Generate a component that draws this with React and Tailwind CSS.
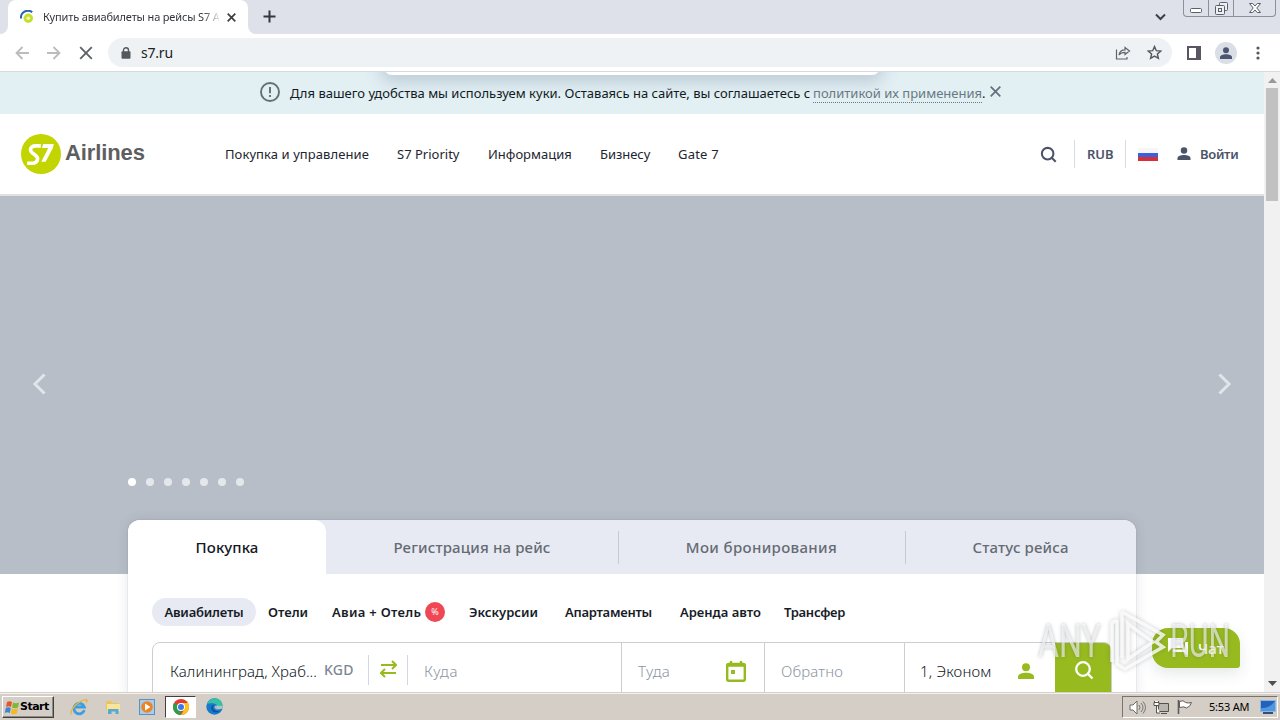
const products = [
  { t: "Покупка", c: "w-[198px] rounded-t-[12px] bg-white text-[#14171f] tracking-[0.1px]" },
  { t: "Регистрация на рейс", c: "w-[292px] text-[#666a73] tracking-[0.15px]" },
  { t: "Мои бронирования", c: "w-[287px] text-[#666a73] tracking-[0.35px]", line: true },
  { t: "Статус рейса", c: "w-[231px] text-[#666a73] tracking-[0.15px]", line: true },
];

const nav = [
  { t: "Покупка и управление", c: "w-[172px] tracking-[0.08px]" },
  { t: "S7 Priority", c: "w-[91px]" },
  { t: "Информация", c: "w-[112px]" },
  { t: "Бизнесу", c: "w-[78px] -tracking-[0.05px]" },
  { t: "Gate 7", c: "w-[60px] tracking-[0.2px]" },
];

function Search({ className, w = 2.4 }) {
  return (
    <svg className={className} viewBox="0 0 20 20" fill="none" stroke="currentColor" strokeWidth={w}>
      <circle cx="9" cy="9" r="6.8" />
      <path d="M13.8 13.8 18.5 18.5" />
    </svg>
  );
}

function Person({ className }) {
  return (
    <svg className={className} viewBox="0 0 16 16" fill="currentColor">
      <circle cx="8" cy="4.2" r="4" />
      <path d="M0 16v-2.2C0 11 4 9.8 8 9.8s8 1.200 8 4V16z" />
    </svg>
  );
}

function TabStrip() {
  return (
    <div className="flex h-[34px] shrink-0 bg-[#dee1e9]">
      <div className="w-2 bg-white">
        <div className="h-full rounded-br-[8px] bg-[#dee1e9]" />
      </div>
      <div className="flex w-[240px] items-center rounded-t-[8px] bg-white pl-3">
        <svg className="size-[14px] shrink-0" viewBox="0 0 14 14">
          <circle cx="8.300" cy="8.300" r="4.700" fill="#c4e02c" />
          <circle cx="8.300" cy="8.300" r="1.800" fill="#f0f5b8" />
          <path d="M1 8.500A7 7 0 0 1 12.200 2.200" fill="none" stroke="#2a62b8" strokeWidth="2" />
        </svg>
        <div className="ml-[9px] h-[18px] w-[176px] overflow-hidden text-[11px] leading-[18px] whitespace-nowrap text-[#33363b] [mask-image:linear-gradient(to_right,black_160px,transparent_178px)] -tracking-[0.15px]">
          Купить авиабилеты на рейсы S7 A
        </div>
        <svg className="ml-[8px] size-[9px] shrink-0" viewBox="0 0 9 9" stroke="#3c4043" strokeWidth="1.700">
          <path d="M.7.7l7.600 7.600M8.300.7L.7 8.300" />
        </svg>
      </div>
      <div className="w-2 bg-white">
        <div className="h-full rounded-bl-[8px] bg-[#dee1e9]" />
      </div>
      <svg className="mt-[10px] ml-[7px] size-[13px]" viewBox="0 0 13 13" stroke="#33363b" strokeWidth="2">
        <path d="M6.500.5v12M.5 6.500h12" />
      </svg>
      <svg className="mt-[13px] ml-auto h-[8px] w-[11px]" viewBox="0 0 11 8" fill="none" stroke="#3c4043" strokeWidth="2">
        <path d="M1 1.500l4.500 4.500L10 1.500" />
      </svg>
      <div className="mr-[4px] ml-[17px] flex h-[17px] w-[93px] rounded-b-[4px] border border-t-0 border-[#8b909b] text-[#5a5f68]">
        <div className="flex w-[25px] justify-center border-r border-[#8b909b]">
          <svg className="mt-[8px] h-[5px] w-[12px]" viewBox="0 0 12 5" fill="#fff" stroke="currentColor"><rect x=".5" y=".5" width="11" height="4" rx="1" /></svg>
        </div>
        <div className="flex w-[25px] justify-center border-r border-[#8b909b]">
          <svg className="mt-[2px] size-[13px]" viewBox="0 0 13 13" fill="#eef0f4" stroke="currentColor"><rect x="4.500" y=".5" width="8" height="8" rx="1" /><rect x=".5" y="3.500" width="9" height="9" rx="1" /><rect x="3.500" y="6.500" width="3" height="3" /></svg>
        </div>
        <div className="flex flex-1 justify-center">
          <svg className="mt-[3px] h-[10px] w-[12px]" viewBox="0 0 12 10" fill="#fff" stroke="currentColor"><path d="M.5.5h3.200L6 3 8.300.5h3.200L7.800 5l3.700 4.500H8.300L6 7 3.700 9.500H.5L4.200 5z" /></svg>
        </div>
      </div>
    </div>
  );
}

function Toolbar() {
  return (
    <div className="flex h-[38px] shrink-0 items-center border-b border-[#d5dadc] bg-white">
      <div className="ml-[15px] flex items-center gap-[18px]">
        <svg className="h-[14px] w-[14px]" viewBox="0 0 14 14" fill="none" stroke="#babcbe" strokeWidth="1.800"><path d="M14 7H1.500M7.500 1l-6 6 6 6" /></svg>
        <svg className="h-[14px] w-[14px]" viewBox="0 0 14 14" fill="none" stroke="#babcbe" strokeWidth="1.800"><path d="M0 7h12.500M6.500 1l6 6-6 6" /></svg>
        <svg className="h-[14px] w-[14px]" viewBox="0 0 14 14" fill="none" stroke="#5f6368" strokeWidth="1.900"><path d="M1.200 1.200l11.600 11.600M12.800 1.200l-11.600 11.600" /></svg>
      </div>
      <div className="ml-[15px] flex h-[29px] w-[1064px] items-center rounded-full bg-[#eff2f5] pr-[10px] pl-[13px]">
        <svg className="h-[12px] w-[10px]" viewBox="0 0 10 12"><rect x=".5" y="4.300" width="9" height="7.500" rx="1" fill="#55585d" /><path d="M2.500 5V3.200a2.500 2.500 0 0 1 5 0V5" fill="none" stroke="#55585d" strokeWidth="1.400" /></svg>
        <span className="ml-[10px] text-[14px] text-[#202124] -tracking-[0.2px]">s7.ru</span>
        <svg className="mt-[1px] mr-px ml-auto h-[14px] w-[16px]" viewBox="0 0 16 14" fill="none" stroke="#5f6368" strokeWidth="1.200"><path d="M1.500 3.500v9.500h10.500v-2M4 9c.5-3.500 2.500-5.200 6-5.200V1.500L14.500 5 10 8.500V6.300C7.500 6.300 5.500 7 4 9z" /></svg>
        <svg className="ml-[15px] size-[15px]" viewBox="0 0 24 24" fill="none" stroke="#55585d" strokeWidth="2.300"><path d="M12 2.500l2.900 6.600 7.100.6-5.400 4.700 1.600 7-6.200-3.700-6.200 3.700 1.600-7L2 9.700l7.100-.6z" /></svg>
      </div>
      <svg className="ml-[15px] size-[14px]" viewBox="0 0 14 14"><rect x="1" y="1" width="12" height="12" fill="#fff" stroke="#5a5560" strokeWidth="2" /><path d="M9 0h5v14H9z" fill="#5a5560" /></svg>
      <div className="ml-[14px] flex size-[22px] items-center justify-center rounded-full bg-[#dadfe5] text-[#4c5572]">
        <Person className="h-[12px] w-[12px]" />
      </div>
      <svg className="ml-[19px] h-[14px] w-[4px]" viewBox="0 0 4 14" fill="#55585d"><circle cx="2" cy="2" r="1.600" /><circle cx="2" cy="7" r="1.600" /><circle cx="2" cy="12" r="1.600" /></svg>
    </div>
  );
}

function CookieBar() {
  return (
    <div className="relative flex h-[42px] shrink-0 items-center overflow-hidden bg-[#e2eff3] pl-[260px] text-[13px] whitespace-nowrap">
      <div className="absolute -top-[13px] left-[384px] h-[16px] w-[496px] rounded-b-[8px] bg-white shadow-[0_4px_16px_3px_rgba(80,105,135,0.26)]" />
      <svg className="relative size-[20px] -translate-y-px" viewBox="0 0 20 20" fill="none" stroke="#646e74" strokeWidth="1.900"><circle cx="10" cy="10" r="9" /><path d="M10 5v6.200M10 13v2" /></svg>
      <div className="relative mt-[2px] ml-[10px] w-[523px] text-[#101b23]">Для вашего удобства мы используем куки. Оставаясь на сайте, вы соглашаетесь с</div>
      <div className="relative mt-[2px] border-b border-dotted border-[#687982] leading-[17px] text-[#687982]">политикой их применения</div>
      <span className="mt-[2px] w-[4px] text-[#101b23]">.</span>
      <svg className="ml-[4px] size-[11px] -translate-y-[2px]" viewBox="0 0 11 11" stroke="#60717b" strokeWidth="1.700"><path d="M.7.7l9.600 9.600M10.300.7L.7 10.300" /></svg>
    </div>
  );
}

function Header() {
  return (
    <header className="flex h-[82px] shrink-0 items-center border-b-2 border-[#dfe1e3] bg-white pl-[21px] text-[13px] whitespace-nowrap">
      <svg className="size-[40px]" viewBox="0 0 40 40">
        <circle cx="20" cy="20" r="20" fill="#c2d500" />
        <path d="M19.800 11.900h-5.300c-2.800 0-4.900 1.600-5 3.900 0 2 1.200 3 3.500 4.500 2.600 1.700 3.800 2.600 3.600 4.700-.2 2.500-2.300 4.200-5.200 4.200H6.200" fill="none" stroke="#fff" strokeWidth="3.600" />
        <path d="M22 10.100h10.800l-.9 3.900-7.300 13.800h-4.300l7-13.900h-6.200z" fill="#fff" />
      </svg>
      <span className="mb-[2px] ml-[4px] w-[160px] font-['Liberation_Sans',sans-serif] text-[22px] leading-[38px] font-bold text-[#5d5e60] -tracking-[0.1px]">Airlines</span>
      <nav className="mt-[2px] flex text-[#1d2530]">
        {nav.map((n) => <a key={n.t} className={n.c}>{n.t}</a>)}
      </nav>
      <div className="ml-auto flex items-center text-[#4a5468]">
        <Search className="mr-[17px] size-[17px]" />
        <div className="mr-[12px] h-[28px] w-px bg-[#d8dbe0]" />
        <span className="mt-[2px] w-[38px] font-semibold">RUB</span>
        <div className="mr-[12px] h-[28px] w-px bg-[#d8dbe0]" />
        <div className="flex h-[13px] w-[20px] flex-col">
          <div className="h-[5px] bg-[#f6f6f8]" /><div className="h-[4px] bg-[#3d5fdc]" /><div className="h-[4px] bg-[#d52f38]" />
        </div>
        <Person className="mr-[9px] ml-[19px] mb-px h-[13px] w-[14px]" />
        <span className="mt-[2px] w-[64px] font-semibold -tracking-[0.3px]">Войти</span>
      </div>
    </header>
  );
}

function Hero() {
  return (
    <section className="flex h-[378px] shrink-0 flex-col bg-[#b7bec7]">
      <div className="flex justify-between px-[32px] pt-[177px]">
        <svg className="h-[22px] w-[14px]" viewBox="0 0 14 22" fill="none" stroke="#e2e5e9" strokeWidth="3"><path d="M12.500 1.500L3 11l9.500 9.500" /></svg>
        <svg className="h-[22px] w-[14px]" viewBox="0 0 14 22" fill="none" stroke="#e2e5e9" strokeWidth="3"><path d="M1.500 1.500L11 11l-9.500 9.500" /></svg>
      </div>
      <div className="flex gap-[10px] pt-[83px] pl-[128px]">
        <i className="size-2 rounded-full bg-white" />
        {[1, 2, 3, 4, 5, 6].map((i) => <i key={i} className="size-2 rounded-full bg-[#e5e8eb]" />)}
      </div>
    </section>
  );
}

function Booking() {
  return (
    <section className="relative mt-[-54px] ml-[128px] w-[1008px] rounded-t-[12px] bg-white whitespace-nowrap shadow-[0_0_12px_rgba(60,70,95,0.14),0_0_1px_rgba(60,70,95,0.5)]">
      <div className="flex h-[54px] rounded-t-[12px] bg-[#e7eaf2] text-[15px] font-medium">
        {products.map((p) => (
          <div key={p.t} className="flex items-center">
            {p.line && <div className="-mr-px h-[33px] w-px bg-[#c5cad4]" />}
            <div className={"flex h-full items-center justify-center pt-px " + p.c}>{p.t}</div>
          </div>
        ))}
      </div>
      <div className="mt-[24px] flex h-[28px] items-center pl-[24px] text-[13px] font-semibold text-[#171c27]">
        <div className="flex h-full w-[104px] items-center justify-center rounded-full bg-[#e7eaf2] pt-px -tracking-[0.2px]">Авиабилеты</div>
        <span className="mt-px ml-[12px] w-[64px]">Отели</span>
        <span className="mt-px w-[93px] tracking-[0.3px]">Авиа + Отель</span>
        <span className="mr-[24px] flex size-[20px] items-center justify-center rounded-full bg-[#ef4753] text-[9px] font-normal text-white">%</span>
        <span className="mt-px w-[96px]">Экскурсии</span>
        <span className="mt-px w-[115px] -tracking-[0.25px]">Апартаменты</span>
        <span className="mt-px w-[104px]">Аренда авто</span>
        <span className="mt-px -tracking-[0.28px]">Трансфер</span>
      </div>
      <div className="mt-[16px] ml-[24px] flex h-[58px] w-[960px] items-center overflow-hidden rounded-[8px] border border-[#cbced3] text-[15px] text-[#8a94a3]">
        <span className="ml-[17px] w-[154px] tracking-[0.07px] text-[#101522] font-light">Калининград, Храб...</span>
        <span className="w-[44px] pb-[3px] text-[14px] font-medium tracking-[0.2px] text-[#7b8796]">KGD</span>
        <div className="mb-[2px] h-[30px] w-px bg-[#d5d6e0]" />
        <svg className="mr-[10px] mb-[5px] ml-[11px] h-[18px] w-[17px]" viewBox="0 0 17 18" fill="none" stroke="#97ba1e" strokeWidth="2"><path d="M1 5h15M12 1l4 4-4 4M16 13H1M5 9l-4 4 4 4" /></svg>
        <div className="mb-[2px] h-[30px] w-px bg-[#d5d6e0]" />
        <span className="ml-[16px] w-[197px] font-light tracking-[0.5px]">Куда</span>
        <div className="h-full w-px bg-[#cbced3]" />
        <span className="ml-[16px] w-[88px] font-light tracking-[0.3px]">Туда</span>
        <svg className="mr-[18px] h-[21px] w-[20px]" viewBox="0 0 20 21" fill="none" stroke="#97ba1e" strokeWidth="2.400"><rect x="1.200" y="3" width="17.600" height="16.800" rx="1.500" /><path d="M5 0v4M15 0v4M1 4.500h18" /><path d="M5 9h4v4H5z" fill="#97ba1e" stroke="none" /></svg>
        <div className="h-full w-px bg-[#cbced3]" />
        <span className="ml-[16px] w-[123px] font-light tracking-[0.15px]">Обратно</span>
        <div className="h-full w-px bg-[#cbced3]" />
        <span className="ml-[15px] w-[98px] font-light tracking-[0.2px] text-[#101522]">1, Эконом</span>
        <Person className="h-[16px] w-[16px] text-[#97ba1e]" />
        <div className="-mr-px ml-auto flex h-[58px] w-[57px] shrink-0 items-center justify-center bg-[#97ba1e] text-white">
          <Search className="mb-[3px] size-[20px]" w={2.300} />
        </div>
      </div>
      <div className="h-[30px]" />
    </section>
  );
}

function Watermark() {
  return (
    <div className="absolute top-[609px] left-[1038px] flex h-[64px] w-[196px] items-center font-['Roboto',sans-serif] text-[46px] leading-[64px] text-white/60 [text-shadow:0_0_4px_rgba(80,85,95,0.4)]">
      <div className="w-[67px]"><div className="w-max origin-left scale-x-[0.7]">ANY</div></div>
      <svg className="h-[64px] w-[62px] shrink-0 overflow-visible drop-shadow-[0_0_2px_rgba(70,75,85,0.35)]" viewBox="0 0 62 64" fill="none" stroke="#fff" strokeOpacity=".8" strokeWidth="3.500">
        <path d="M7 53V14l5-3M17 3l41 23-7 7 7 5-38 22-8-5V11M17 49V3M23 15v35l25-17zM17 3v46" />
      </svg>
      <div className="w-[60px] pl-[3px]"><div className="w-max origin-left scale-x-[0.66]">RUN</div></div>
    </div>
  );
}

function Scrollbar() {
  return (
    <div className="flex w-[16px] shrink-0 flex-col items-center bg-[#f1f1f1]">
      <svg className="mt-[6px] h-[5px] w-[9px]" viewBox="0 0 9 5" fill="#999"><path d="M4.500 0L9 5H0z" /></svg>
      <div className="mt-[5px] h-[113px] w-[12px] bg-[#c1c1c1]" />
      <svg className="mt-auto mb-[6px] h-[5px] w-[9px]" viewBox="0 0 9 5" fill="#505050"><path d="M4.500 5L9 0H0z" /></svg>
    </div>
  );
}

function Taskbar() {
  return (
    <footer className="flex h-[28px] shrink-0 items-center border-t border-[#d5d1c8] bg-[#d5cec7] shadow-[inset_0_1px_0_#f4f2ee]">
      <div className="mt-[1px] ml-[2px] flex h-[22px] w-[52px] items-center border border-t-white border-r-[#404040] border-b-[#404040] border-l-white pl-px shadow-[inset_-1px_-1px_0_#908b84]">
        <svg className="h-[15px] w-[16px]" viewBox="0 0 16 15"><path d="M3 2c2-1.300 3.500-1 5 0L7 7c-1.500-1-3-1.300-5 0z" fill="#e9532b" /><path d="M9 2.500c2 1 3.500 1 6 0l-1 5c-2 1-4 1-6 0z" fill="#7db83a" /><path d="M1.800 8c2-1.300 3.500-1 5 0l-1 5c-1.500-1-3-1.300-5 0z" fill="#3887d6" /><path d="M7.800 8.500c2 1 3.500 1 6 0l-1 5c-2 1-4 1-6 0z" fill="#f5b921" /></svg>
        <span className="mt-px font-['DejaVu_Sans',sans-serif] text-[11px] font-bold text-black -tracking-[0.5px]">Start</span>
      </div>
      <svg className="ml-[16px] size-[18px]" viewBox="0 0 17 17" fill="none"><path d="M13.500 11.500A5 5 0 1 1 13.500 8.500H4" stroke="#3c9de0" strokeWidth="2.600" /><path d="M1.500 15.500C-1 12 8 2 15.500 1.500c1 .5.500 2-.5 3" stroke="#e4b73a" strokeWidth="1.300" /></svg>
      <svg className="ml-[17px] h-[16px] w-[16px]" viewBox="0 0 16 16"><path d="M1 2h5l1 2h7v8H1z" fill="#e9c65b" /><path d="M2 5h13v7H2z" fill="#f8e59a" /><path d="M3 15v-5h10.500v5h-3v-2.500h-4V15z" fill="#56a9cf" /></svg>
      <svg className="ml-[18px] h-[16px] w-[16px]" viewBox="0 0 16 16"><rect x=".5" y=".5" width="15" height="15" fill="#a8cdec" stroke="#5792c4" /><circle cx="8" cy="8" r="5.800" fill="#ee8320" /><path d="M6 4.500v7l5.500-3.500z" fill="#fff" /></svg>
      <div className="ml-[10px] flex h-[22px] w-[31px] items-center justify-center border border-t-[#404040] border-r-white border-b-white border-l-[#404040] bg-white">
        <svg className="size-[16px]" viewBox="0 0 16 16"><circle cx="8" cy="8" r="8" fill="#e33b2e" /><path d="M1.070 4L8 8v8A8 8 0 0 1 1.070 4z" fill="#2f9d4c" /><path d="M8 4h6.930A8 8 0 0 1 8 16l3.500-6z" fill="#fcc31e" /><circle cx="8" cy="8" r="4" fill="#fff" /><circle cx="8" cy="8" r="3" fill="#3a78e7" /></svg>
      </div>
      <svg className="ml-[10px] size-[17px]" viewBox="0 0 17 17"><circle cx="8.500" cy="8.500" r="8.200" fill="#1779c9" /><path d="M1 6C4-2 17-1 16.500 8c-.3 3-4 3.500-6 2.500 2-3-.5-5-3-5C4.500 5 2 6 1 6z" fill="#36c0a6" /><path d="M9 7c-4 2-2 7 5 6-2 2-7 2-8.500-1.500C4.500 9 6 7 9 7z" fill="#0c4f9d" /><path d="M9.500 7.500c-2 1-1 3.500 1.500 4l5-.5 1-3z" fill="#d5cec7" opacity=".75" /></svg>
      <div className="mt-[1px] mr-[2px] ml-auto flex h-[22px] w-[156px] items-center border border-t-[#77736d] border-r-white border-b-white border-l-[#77736d] pl-[6px]">
        <svg className="h-[15px] w-[17px]" viewBox="0 0 17 15" fill="none" stroke="#6d6a66"><path d="M1 5h3l4-4v13l-4-4H1z" fill="#fff" /><path d="M10 5q2 2.500 0 5M12 3q4 4.500 0 9M14 1.500q5 6 0 12" strokeWidth=".9" /></svg>
        <svg className="ml-[7px] h-[15px] w-[17px]" viewBox="0 0 17 15" fill="#fff" stroke="#55524e"><path d="M5.500 3.500h10v8h-10z" fill="#b9b6b1" /><path d="M8 13.500h6M1.500 1v4h4V1M3.500 5v8H7" /><path d="M1 2.500h5v3H1z" /></svg>
        <svg className="ml-[7px] h-[16px] w-[16px]" viewBox="0 0 16 16" fill="#fff" stroke="#5f5c58"><path d="M2.500 2.500q4-2 6 1 3 1 6 0-1 4-5 5.500-2-2-7-.5z" /><path d="M1.500 1v14" strokeWidth="1.600" /></svg>
        <span className="ml-[16px] w-[51px] text-[11px] whitespace-nowrap text-black -tracking-[0.2px]">5:53 AM</span>
        <svg className="h-[14px] w-[16px] shrink-0" viewBox="0 0 16 14"><rect x=".5" y=".5" width="15" height="11" fill="#2461bb" stroke="#8fb8df" /><path d="M1 8q8 1 14-7v10H1z" fill="#5197e0" /><path d="M3 13h10" stroke="#344f75" strokeWidth="2" /></svg>
      </div>
    </footer>
  );
}

export default function App() {
  return (
    <div className="relative flex h-[720px] w-[1280px] flex-col overflow-hidden bg-white font-['Noto_Sans',sans-serif]">
      <TabStrip />
      <Toolbar />
      <div className="flex h-[620px] shrink-0">
        <main className="flex w-[1264px] flex-col overflow-hidden">
          <CookieBar />
          <Header />
          <Hero />
          <Booking />
        </main>
        <Scrollbar />
      </div>
      <Taskbar />
      <button className="absolute top-[628px] left-[1152px] flex h-[40px] w-[88px] items-center rounded-[16px] rounded-br-[3px] bg-[#97ba1e] pl-[16px] text-[15px] text-white shadow-[0_6px_14px_rgba(60,70,80,0.12)]">
        <svg className="mb-[2px] h-[18px] w-[20px]" viewBox="0 0 20 18" fill="#fff"><path d="M0 0h15v10H4l-4 4z" /><path d="M17 4h3v14l-4-4H5v-2.500h12z" /></svg>
        <span className="ml-[10px] font-medium">Чат</span>
      </button>
      <Watermark />
    </div>
  );
}
